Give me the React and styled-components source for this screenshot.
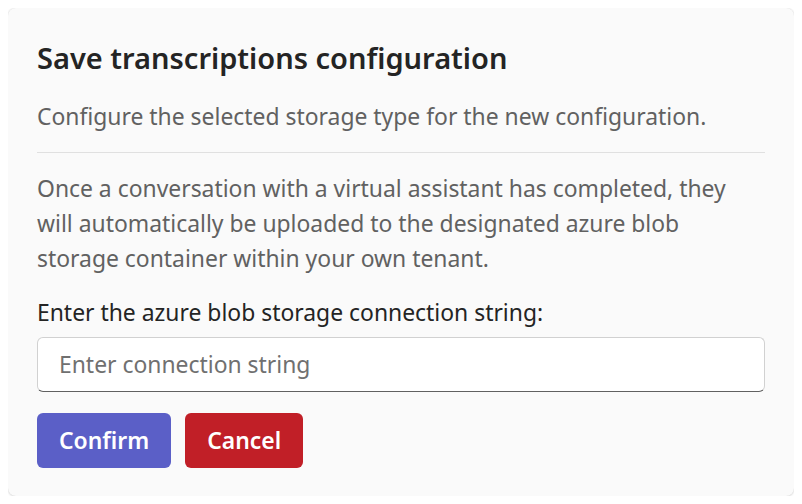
import React from "react";
import styled, { createGlobalStyle } from "styled-components";

const GlobalStyle = createGlobalStyle`
  html, body { background: #ffffff; }
  body {
    margin: 8px;
    font-family: "Noto Sans", "Open Sans", sans-serif;
    -webkit-font-smoothing: antialiased;
  }
  * { box-sizing: border-box; }
`;

const Card = styled.section`
  background: #fafafa;
  border-radius: 8px;
  box-shadow: 0 0 2px rgba(0, 0, 0, 0.14), 0 1px 3px rgba(0, 0, 0, 0.1);
  padding: 30px 29px 28px 29px;
  display: flex;
  flex-direction: column;
`;

const Title = styled.h1`
  margin: 0;
  font-size: 29px;
  font-weight: 600;
  line-height: 40px;
  color: #242424;
`;

const Text = styled.p`
  margin: ${(p) => p.$mt || 0}px 0 0 0;
  font-size: 22.9px;
  line-height: 35px;
  color: ${(p) => p.$color || "#616161"};
`;

const Divider = styled.hr`
  margin: 18px 0 0 0;
  border: none;
  height: 1px;
  background: #e0e0e0;
`;

const Label = styled.label`
  display: block;
  margin-top: 19px;
  font-size: 22.9px;
  line-height: 35px;
  color: #242424;
`;

const Input = styled.input`
  margin-top: 7px;
  height: 55px;
  width: 100%;
  padding: 0 21px;
  font-family: inherit;
  font-size: 22.9px;
  color: #242424;
  background: #ffffff;
  border: 1px solid #d1d1d1;
  border-bottom-color: #616161;
  border-radius: 6px;
  outline: none;
  &::placeholder { color: #707070; }
`;

const Actions = styled.div`
  margin-top: 21px;
  display: flex;
  gap: 14px;
`;

const Button = styled.button`
  height: 55px;
  padding: 0 22px;
  border: none;
  border-radius: 6px;
  font-family: inherit;
  font-size: 22.9px;
  font-weight: 600;
  color: #ffffff;
  background: ${(p) => (p.$variant === "danger" ? "#c11f27" : "#5b5fc7")};
  cursor: pointer;
`;

export default function App() {
  return (
    <>
      <GlobalStyle />
      <Card>
        <Title>Save transcriptions configuration</Title>
        <Text $mt={21}>Configure the selected storage type for the new configuration.</Text>
        <Divider />
        <Text $mt={18}>
          Once a conversation with a virtual assistant has completed, they
          <br />
          will automatically be uploaded to the designated azure blob
          <br />
          storage container within your own tenant.
        </Text>
        <Label htmlFor="conn">Enter the azure blob storage connection string:</Label>
        <Input id="conn" type="text" placeholder="Enter connection string" />
        <Actions>
          <Button>Confirm</Button>
          <Button $variant="danger">Cancel</Button>
        </Actions>
      </Card>
    </>
  );
}
